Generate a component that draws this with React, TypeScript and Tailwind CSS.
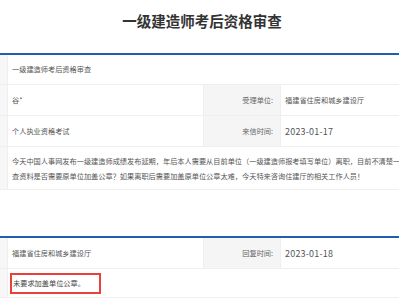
import React from 'react';

const font = "font-['Noto_Sans_CJK_SC','Noto_Sans',sans-serif]";

function Row({
  left,
  label,
  value,
  date,
}: {
  left: React.ReactNode;
  label: string;
  value: string;
  date?: boolean;
}) {
  return (
    <>
      <div className="bg-[#f7f7f7] border-b border-r border-[#efefef]" />
      <div className="h-[31px] flex items-center pl-[4px] border-b border-[#efefef] text-[#555]">{left}</div>
      <div className="h-[31px] flex items-center justify-end pr-[7px] bg-[#f5f5f5] border-b border-x border-[#efefef] text-[#666]">
        {label}
      </div>
      <div
        className={
          date
            ? 'h-[31px] flex items-center pl-[4px] border-b border-[#efefef] text-[#555] text-[9px] tracking-[0.2px]'
            : 'h-[31px] flex items-center pl-[4px] border-b border-[#efefef] text-[#555]'
        }
      >
        {value}
      </div>
    </>
  );
}

export default function App() {
  return (
    <div className={`w-[399px] h-[300px] overflow-hidden bg-white ${font} text-[7.2px] leading-[15px]`}>
      {/* 标题 */}
      <div className="h-[53px] pt-[11px] pl-[5px] text-center">
        <h1 className="text-[14.5px] leading-[20px] font-bold text-[#333]">一级建造师考后资格审查</h1>
      </div>

      {/* 来信 */}
      <div className="w-[640px] border-t-2 border-[#1f5fae] grid grid-cols-[8px_195px_78px_1fr]">
        <div className="bg-[#f7f7f7] border-b border-r border-[#efefef]" />
        <div className="col-span-3 h-[30px] flex items-center pl-[4px] border-b border-[#efefef] text-[#555]">
          一级建造师考后资格审查
        </div>

        <Row left="谷*" label="受理单位:" value="福建省住房和城乡建设厅" />
        <Row left="个人执业资格考试" label="来信时间:" value="2023-01-17" date />

        <div className="bg-[#f7f7f7] border-b border-r border-[#efefef]" />
        <div className="col-span-3 h-[43px] pl-[4px] pt-[7px] border-b border-[#efefef] text-[#555] whitespace-nowrap">
          今天中国人事网发布一级建造师成绩发布延期，年后本人需要从目前单位（一级建造师报考填写单位）离职，目前不清楚一级建造师考后资格审
          <br />
          查资料是否需要原单位加盖公章？如果离职后需要加盖原单位公章太难，今天特来咨询住建厅的相关工作人员！
        </div>
      </div>

      {/* 回复 */}
      <div className="mt-[46px] w-[640px] border-t-2 border-[#1f5fae] grid grid-cols-[8px_195px_78px_1fr]">
        <Row left="福建省住房和城乡建设厅" label="回复时间:" value="2023-01-18" date />

        <div className="bg-[#f7f7f7] border-b border-r border-[#efefef]" />
        <div className="col-span-3 h-[29px] flex items-center pl-[2px] border-b border-[#efefef] text-[#444]">
          <span className="w-[91px] h-[21px] flex items-center pl-[1px] border-2 border-[#e8403a]">未要求加盖单位公章。</span>
        </div>
      </div>
    </div>
  );
}
